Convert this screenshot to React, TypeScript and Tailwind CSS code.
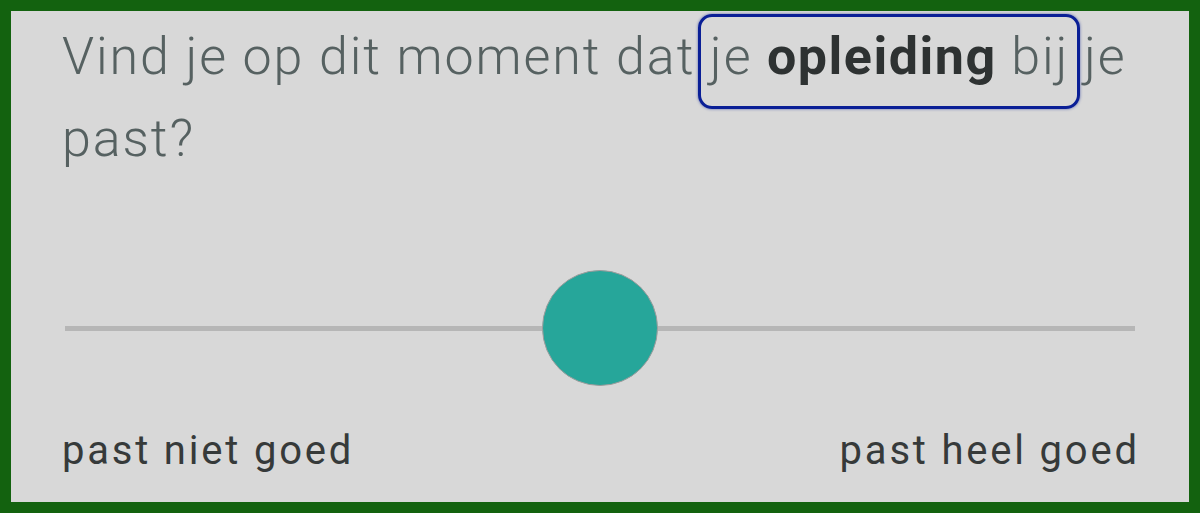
export default function App() {
  return (
    <div className="w-[1200px] h-[513px] bg-[#13620f] p-[11px] box-border" style={{ fontFamily: 'Roboto, "Noto Sans", sans-serif' }}>
      <div className="w-full h-full bg-[#d8d8d8] flex flex-col pl-[51px] pr-[40px] pt-[5px]">
        <p className="text-[52px] leading-[82px] font-light text-[#566161] tracking-[1.9px]">
          Vind je op dit moment dat{" "}
          <span className="relative">
            <span className="absolute left-[-12px] right-[-11px] top-[-12px] bottom-[-22px] border-[3px] border-[#0a1f96] rounded-[14px] shadow-[0_0_3px_rgba(10,31,150,0.6)]" />
            je <span className="font-bold text-[#2e3232] tracking-[1.5px]">opleiding</span> bij
          </span>{" "}
          je past?
        </p>
        <div className="flex items-center h-[116px] mt-[90px] ml-[3px] mr-[14px]">
          <div className="flex-1 h-[5px] bg-[#b6b6b6]" />
          <div className="w-[116px] h-[116px] rounded-full bg-[#26a69a] border border-[#9c9c9c] shrink-0" />
          <div className="flex-1 h-[5px] bg-[#b6b6b6]" />
        </div>
        <div className="flex justify-between mt-[41px] mr-[12px] text-[40px] leading-[48px] text-[#363a3a] tracking-[2.8px]">
          <span>past niet goed</span>
          <span className="mr-[-2.8px]">past heel goed</span>
        </div>
      </div>
    </div>
  );
}
